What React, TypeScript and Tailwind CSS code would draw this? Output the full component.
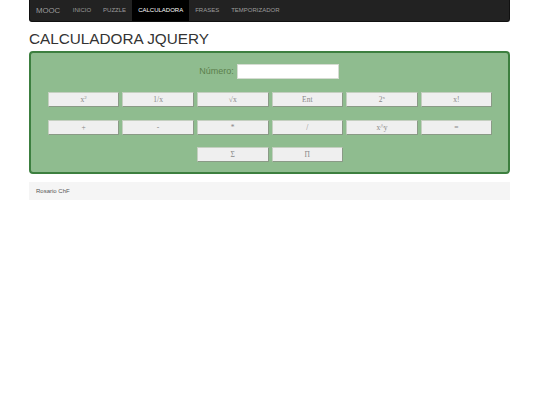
import React from 'react'

const navItems = ['INICIO', 'PUZZLE', 'CALCULADORA', 'FRASES', 'TEMPORIZADOR']

const row1: React.ReactNode[] = [
  <>x<sup className="text-[5px]">2</sup></>,
  '1/x',
  '√x',
  'Ent',
  <>2<sup className="text-[5px]">x</sup></>,
  'x!'
]
const row2: React.ReactNode[] = ['+', '-', '*', '/', 'x^y', '=']

function CalcButton({ children }: { children?: React.ReactNode }) {
  return (
    <button className="h-[15px] w-[71.6px] border border-t-[#c4cfc0] border-l-[#c4cfc0] border-r-[#8a9a86] border-b-[#8a9a86] bg-[#efefef] text-[7.5px] leading-none text-[#888] font-['Liberation_Serif',serif]">
      {children}
    </button>
  )
}

export default function App() {
  return (
    <div className="min-h-[405px] bg-white font-['Liberation_Sans',sans-serif]">
      <div className="ml-[29px] w-[481px]">
        <nav className="flex h-[22px] items-stretch rounded-b-[3px] border border-t-0 border-[#111] bg-[#222] pl-[6px]">
          <span className="mr-[6.5px] self-center text-[7.8px] text-[#9d9d9d]">MOOC</span>
          {navItems.map(item => (
            <a
              key={item}
              className={
                item === 'CALCULADORA'
                  ? 'flex items-center bg-black px-[6px] text-[6px] text-white'
                  : 'flex items-center px-[6px] text-[6px] text-[#9d9d9d]'
              }
            >
              {item}
            </a>
          ))}
        </nav>

        <h1 className="mt-[8px] text-[15.3px] leading-[18px] text-[#333]">CALCULADORA JQUERY</h1>

        <section className="mt-[3px] flex h-[123px] flex-col items-center rounded-[4px] border-2 border-[#3c7f3f] bg-[#8fbc8f]">
          <div className="mt-[11px] flex h-[15px] items-center gap-[3px] pr-[1px]">
            <label className="text-[9px] text-[#5c7f4c]">Número:</label>
            <input className="h-[15px] w-[102px] border border-[#d5dcd2] bg-white" />
          </div>
          <div className="ml-[1px] mt-[13px] flex gap-[3px]">
            {row1.map((b, i) => (
              <CalcButton key={i}>{b}</CalcButton>
            ))}
          </div>
          <div className="ml-[1px] mt-[13px] flex gap-[3px]">
            {row2.map((b, i) => (
              <CalcButton key={i}>{b}</CalcButton>
            ))}
          </div>
          <div className="ml-[1px] mt-[12px] flex gap-[3px]">
            <CalcButton>Σ</CalcButton>
            <CalcButton>Π</CalcButton>
          </div>
        </section>

        <footer className="mt-[8px] flex h-[18px] items-center bg-[#f5f5f5] pl-[7px] text-[6px] text-[#555]">
          Rosario ChF
        </footer>
      </div>
    </div>
  )
}
